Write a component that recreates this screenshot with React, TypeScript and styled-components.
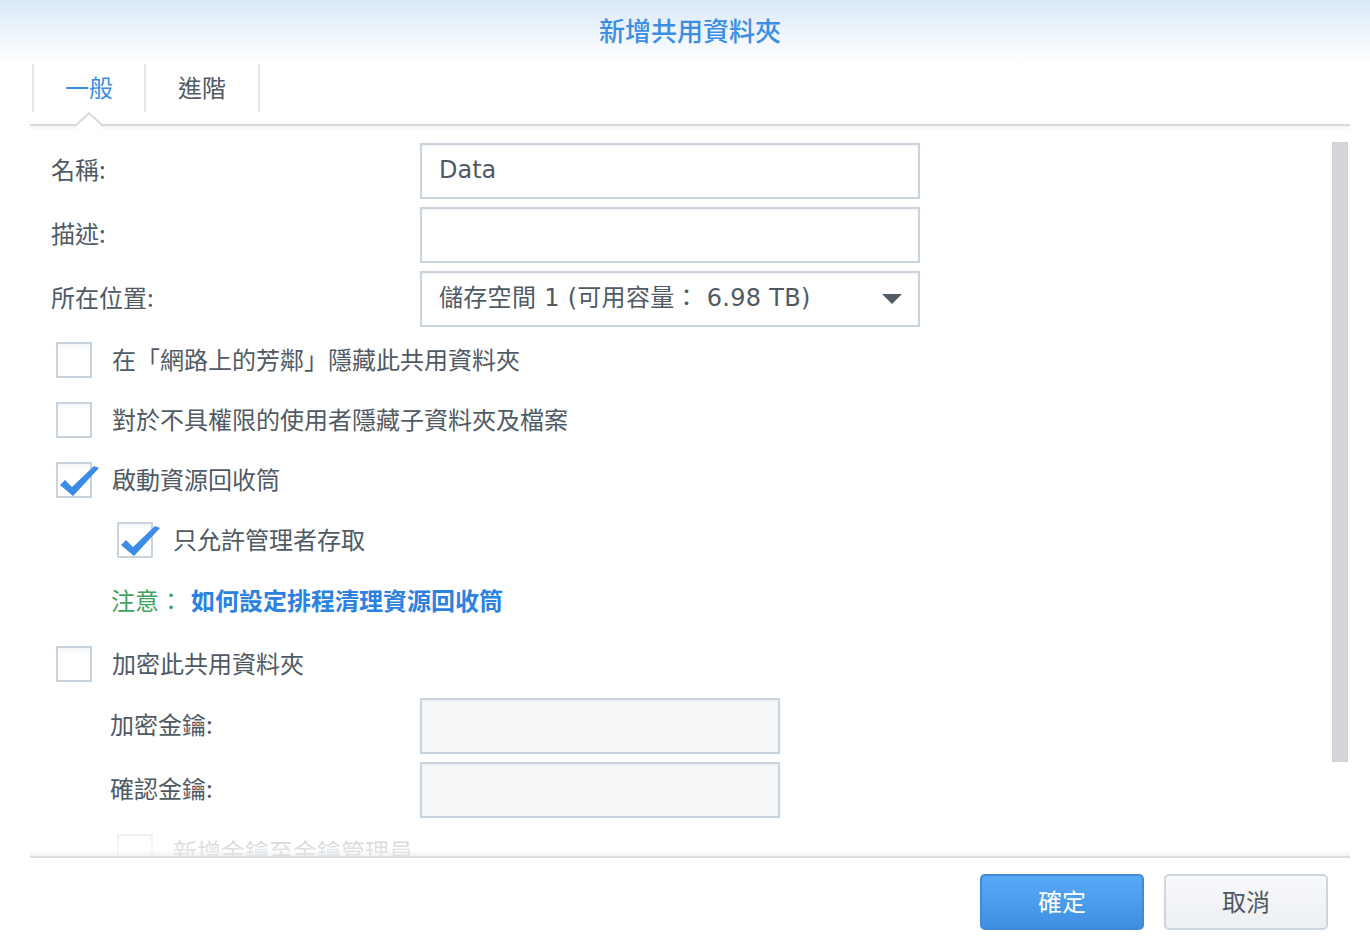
import React from 'react';
import styled, { createGlobalStyle } from 'styled-components';

const GlobalStyle = createGlobalStyle`
  html, body {
    margin: 0;
    padding: 0;
    background: #ffffff;
  }
  body {
    font-family: "DejaVu Sans", "Noto Sans CJK TC", sans-serif;
    color: #505a64;
  }
`;

const Page = styled.div`
  width: 1370px;
  height: 944px;
  display: flex;
  flex-direction: column;
  overflow: hidden;
`;

const Header = styled.div`
  height: 62px;
  flex: none;
  display: flex;
  align-items: center;
  justify-content: center;
  padding-left: 10px;
  background: linear-gradient(to bottom, #dbe9f8 0%, #eef5fc 55%, #ffffff 100%);
`;

const Title = styled.div`
  font-family: "Noto Sans CJK TC", sans-serif;
  font-size: 26px;
  line-height: 1;
  font-weight: 500;
  color: #3b8ee4;
  margin-bottom: 3px;
`;

const TabBar = styled.div`
  flex: none;
  height: 60px;
  margin: 2px 20px 0 30px;
  display: flex;
  align-items: flex-start;
  border-bottom: 2px solid #d9d9d9;
  box-shadow: 0 3px 4px -1px rgba(0, 0, 0, 0.06);
  position: relative;
  z-index: 2;
`;

const Tab = styled.div<{ $active?: boolean; $first?: boolean }>`
  position: relative;
  height: 48px;
  width: ${(p) => (p.$first ? 114 : 114)}px;
  display: flex;
  align-items: center;
  justify-content: center;
  border-right: 2px solid #dfe5ec;
  border-left: ${(p) => (p.$first ? '2px solid #dfe5ec' : 'none')};
  margin-left: ${(p) => (p.$first ? '2px' : '0')};
  font-family: "Noto Sans CJK TC", sans-serif;
  font-size: 24px;
  line-height: 1;
  color: ${(p) => (p.$active ? '#3b8ee4' : '#505a64')};
  padding-bottom: 2px;
  box-sizing: border-box;
`;

const Notch = styled.svg`
  position: absolute;
  left: 41px;
  bottom: -15px;
  width: 28px;
  height: 15px;
  overflow: visible;
`;

const Scroller = styled.div`
  flex: 1;
  position: relative;
  overflow: hidden;
  margin: 0 20px 0 30px;
`;

const Form = styled.div`
  padding: 17px 0 0 21px;
  display: flex;
  flex-direction: column;
`;

const FieldRow = styled.div<{ $gap?: number; $top?: number }>`
  display: flex;
  align-items: center;
  height: 56px;
  margin-top: ${(p) => p.$top ?? 0}px;
  margin-bottom: ${(p) => p.$gap ?? 8}px;
`;

const Label = styled.div<{ $indent?: number }>`
  font-family: "Noto Sans CJK TC", sans-serif;
  font-size: 24px;
  line-height: 1;
  width: ${(p) => 369 - (p.$indent ?? 0)}px;
  padding-left: ${(p) => p.$indent ?? 0}px;
  padding-bottom: 4px;
  flex: none;
  color: #505a64;
`;

const Input = styled.div<{ $width?: number; $disabled?: boolean }>`
  width: ${(p) => p.$width ?? 500}px;
  height: 56px;
  box-sizing: border-box;
  border: 2px solid #c9d4df;
  background: ${(p) => (p.$disabled ? '#f5f7f9' : '#ffffff')};
  box-shadow: inset 0 2px 2px rgba(0, 0, 0, 0.04);
  display: flex;
  align-items: center;
  padding: 0 16px 3px 17px;
  font-size: 24px;
  line-height: 1;
  color: #505a64;
  font-family: "DejaVu Sans", "Noto Sans CJK TC", sans-serif;
`;

const SelectText = styled.span`
  flex: 1;
  letter-spacing: 0.3px;
`;

const Arrow = styled.svg`
  margin-top: 3px;
`;

const CheckRow = styled.div<{ $indent?: number; $faded?: boolean }>`
  display: flex;
  align-items: center;
  height: 60px;
  padding-left: ${(p) => 5 + (p.$indent ?? 0)}px;
  opacity: ${(p) => (p.$faded ? 0.45 : 1)};
`;

const Box = styled.div`
  position: relative;
  width: 36px;
  height: 36px;
  box-sizing: border-box;
  border: 2px solid #c9d4df;
  background: linear-gradient(to bottom, #f3f6f9 0%, #ffffff 18%);
  flex: none;
`;

const Check = styled.svg`
  position: absolute;
  left: 0;
  top: 0;
  width: 44px;
  height: 36px;
  overflow: visible;
`;

const CheckText = styled.span`
  font-family: "Noto Sans CJK TC", sans-serif;
  font-size: 24px;
  line-height: 1;
  margin-left: 20px;
  padding-bottom: 3px;
  color: #505a64;
`;

const NoteRow = styled.div`
  height: 64px;
  display: flex;
  align-items: center;
  padding: 0 0 4px 60px;
  box-sizing: border-box;
  font-family: "Noto Sans CJK TC", sans-serif;
  font-size: 24px;
  line-height: 1;
`;

const NoteLabel = styled.span`
  color: #3fa45f;
  margin-right: 8px;
`;

const NoteLink = styled.a`
  color: #2b82e0;
  font-weight: 600;
  text-decoration: none;
`;

const Thumb = styled.div`
  position: absolute;
  right: 2px;
  top: 16px;
  width: 16px;
  height: 620px;
  background: #d5d6d9;
  border: 1px solid #cfd0d3;
  box-sizing: border-box;
`;

const Fade = styled.div`
  position: absolute;
  left: 0;
  right: 0;
  bottom: 0;
  height: 40px;
  background: linear-gradient(to bottom, rgba(255, 255, 255, 0) 0%, rgba(255, 255, 255, 0.75) 100%);
  pointer-events: none;
`;

const Footer = styled.div`
  flex: none;
  height: 88px;
  margin: 0 20px 0 30px;
  border-top: 2px solid #dcdcdc;
  display: flex;
  justify-content: flex-end;
  align-items: flex-start;
  padding: 16px 22px 0 0;
  gap: 20px;
  box-sizing: border-box;
  position: relative;
  z-index: 2;
  background: #ffffff;

  &::before {
    content: '';
    position: absolute;
    left: 0;
    right: 0;
    top: -8px;
    height: 6px;
    background: linear-gradient(to bottom, rgba(0, 0, 0, 0), rgba(0, 0, 0, 0.05));
  }
`;

const Button = styled.button<{ $primary?: boolean }>`
  width: 164px;
  height: 56px;
  border-radius: 5px;
  font-family: "Noto Sans CJK TC", sans-serif;
  font-size: 24px;
  line-height: 1;
  padding: 0 0 3px;
  cursor: pointer;
  border: 2px solid ${(p) => (p.$primary ? '#3f8ad9' : '#ccd4dd')};
  color: ${(p) => (p.$primary ? '#ffffff' : '#4f5862')};
  background: ${(p) =>
    p.$primary
      ? 'linear-gradient(to bottom, #58aaf7 0%, #3f8fe1 100%)'
      : 'linear-gradient(to bottom, #f8f9fb 0%, #eceff3 100%)'};
`;

const CheckMark = () => (
  <Check viewBox="0 0 44 36">
    <path d="M2 21 L7 16 L14 23 L36 2 L41 4 L15 32 Z" fill="#3a8ce6" />
  </Check>
);

type CheckboxProps = {
  label: string;
  checked?: boolean;
  indent?: number;
  faded?: boolean;
};

const Checkbox: React.FC<CheckboxProps> = ({ label, checked, indent, faded }) => (
  <CheckRow $indent={indent} $faded={faded}>
    <Box>{checked && <CheckMark />}</Box>
    <CheckText>{label}</CheckText>
  </CheckRow>
);

const App: React.FC = () => (
  <Page>
    <GlobalStyle />
    <Header>
      <Title>新增共用資料夾</Title>
    </Header>
    <TabBar>
      <Tab $active $first>
        一般
        <Notch viewBox="0 0 28 15">
          <polygon points="0,14 14,1 28,14 28,17 0,17" fill="#ffffff" />
          <polyline points="0,14 14,1 28,14" fill="none" stroke="#d9d9d9" strokeWidth="2" />
        </Notch>
      </Tab>
      <Tab>進階</Tab>
    </TabBar>
    <Scroller>
      <Form>
        <FieldRow>
          <Label>名稱:</Label>
          <Input>Data</Input>
        </FieldRow>
        <FieldRow>
          <Label>描述:</Label>
          <Input />
        </FieldRow>
        <FieldRow $gap={3}>
          <Label>所在位置:</Label>
          <Input>
            <SelectText>儲存空間 1 (可用容量： 6.98 TB)</SelectText>
            <Arrow width="20" height="10" viewBox="0 0 20 10">
              <polygon points="0,0 20,0 10,10" fill="#535b64" />
            </Arrow>
          </Input>
        </FieldRow>
        <Checkbox label="在「網路上的芳鄰」隱藏此共用資料夾" />
        <Checkbox label="對於不具權限的使用者隱藏子資料夾及檔案" />
        <Checkbox label="啟動資源回收筒" checked />
        <Checkbox label="只允許管理者存取" checked indent={61} />
        <NoteRow>
          <NoteLabel>注意：</NoteLabel>
          <NoteLink href="#">如何設定排程清理資源回收筒</NoteLink>
        </NoteRow>
        <Checkbox label="加密此共用資料夾" />
        <FieldRow $top={4}>
          <Label $indent={59}>加密金鑰:</Label>
          <Input $width={360} $disabled />
        </FieldRow>
        <FieldRow $gap={4}>
          <Label $indent={59}>確認金鑰:</Label>
          <Input $width={360} $disabled />
        </FieldRow>
        <Checkbox label="新增金鑰至金鑰管理員" indent={61} faded />
      </Form>
      <Thumb />
      <Fade />
    </Scroller>
    <Footer>
      <Button $primary>確定</Button>
      <Button>取消</Button>
    </Footer>
  </Page>
);

export default App;
